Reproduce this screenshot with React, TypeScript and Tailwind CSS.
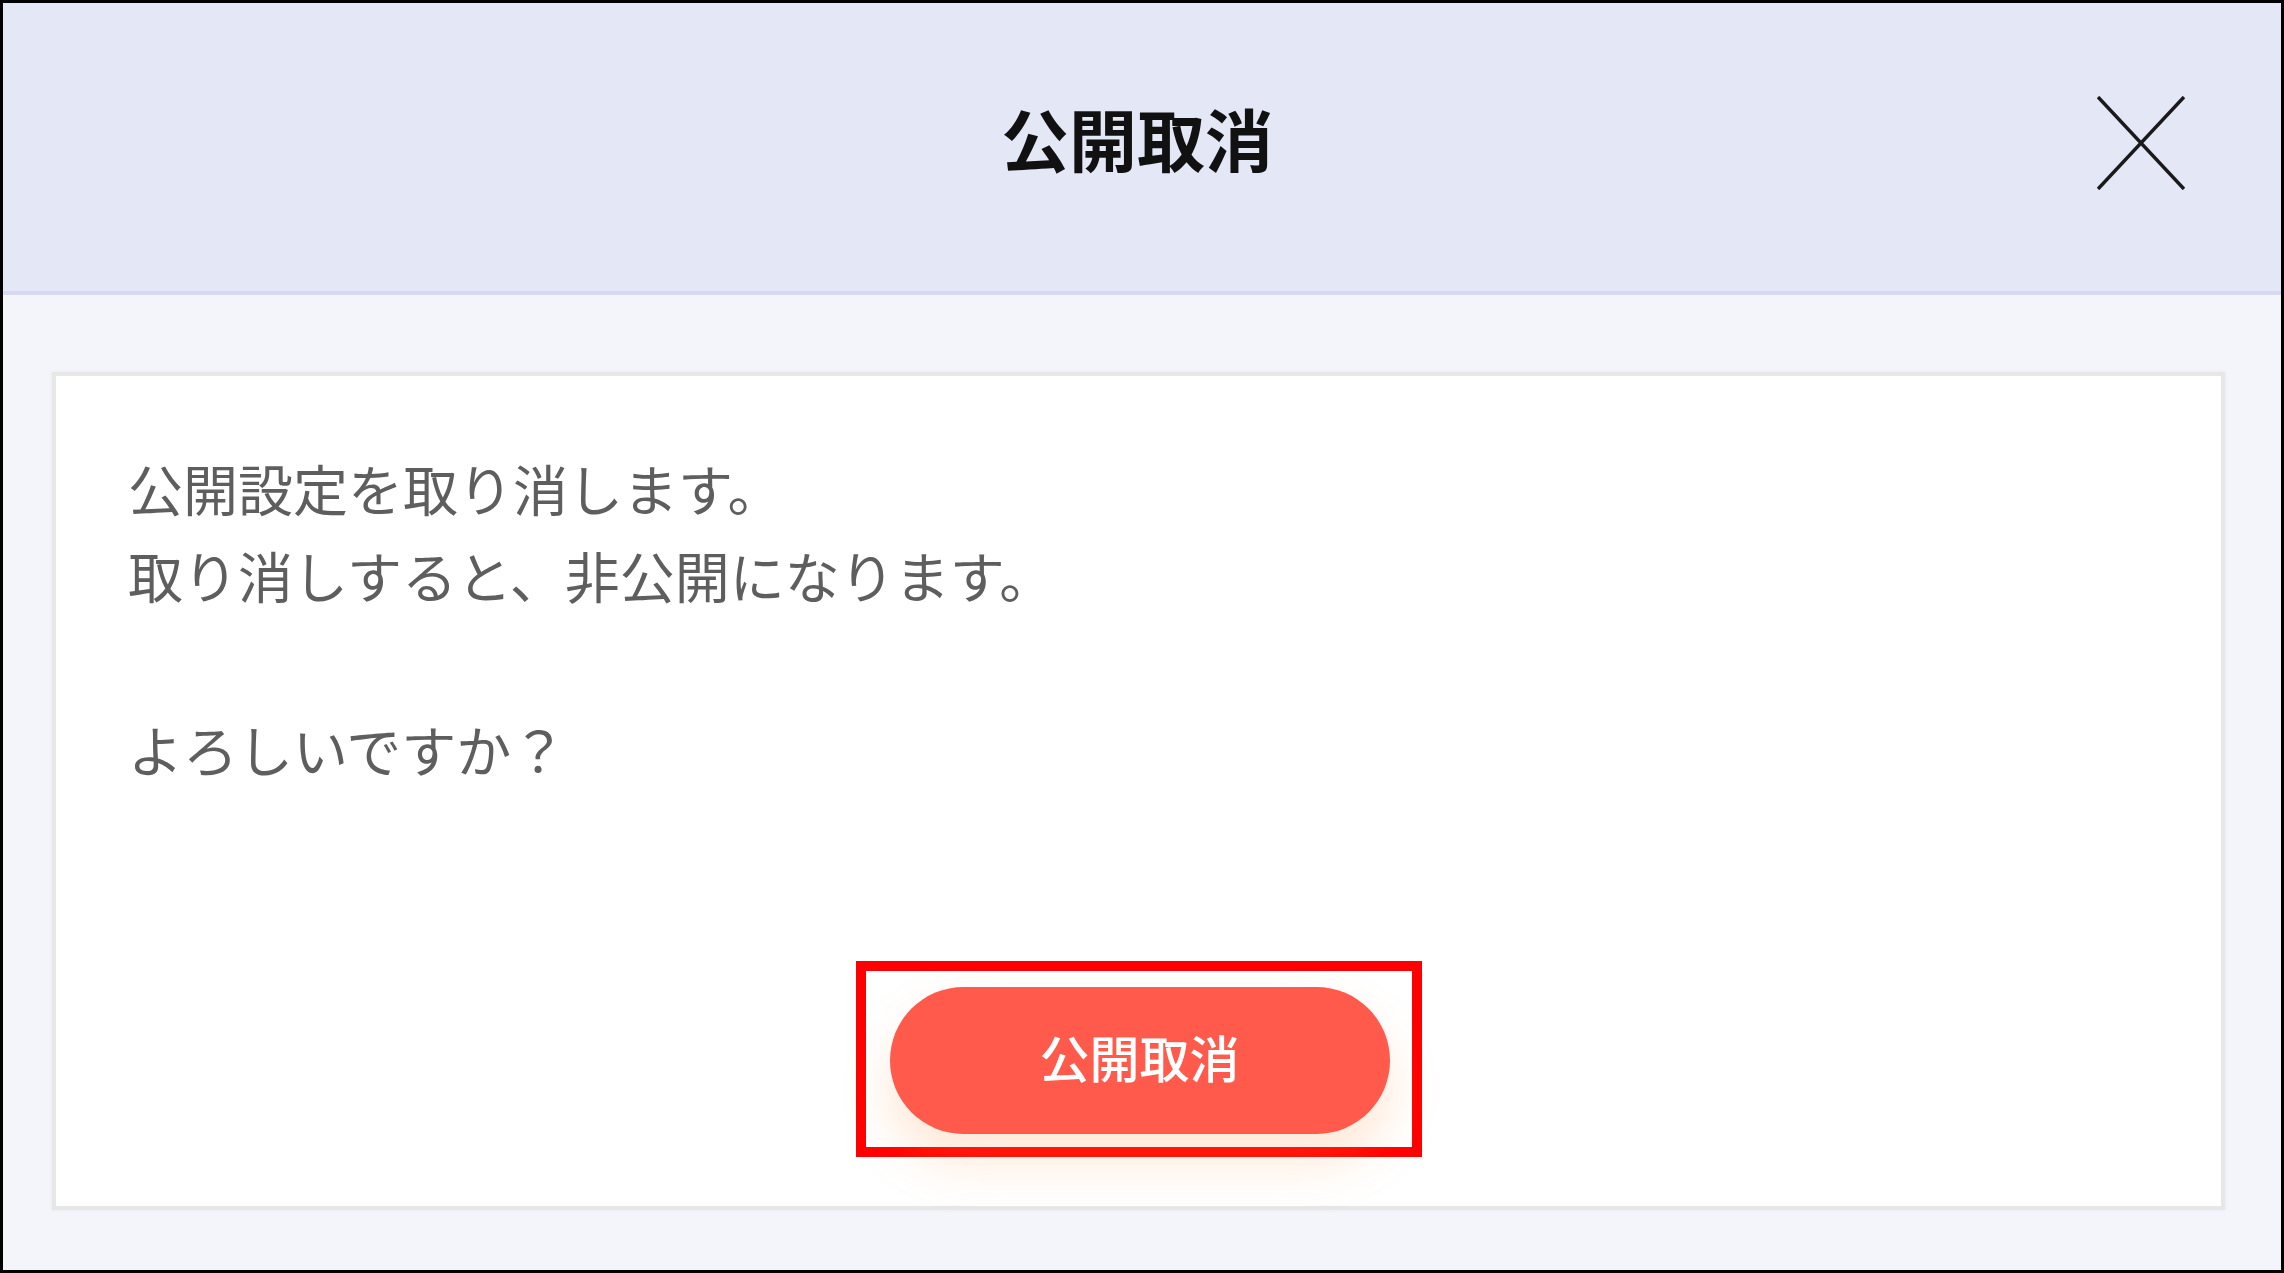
export default function App() {
  const lines = ['公開設定を取り消します。', '取り消しすると、非公開になります。', '', 'よろしいですか？']

  return (
    <div
      className="w-[2284px] h-[1273px] border-[3px] border-black bg-[#f4f5fa] flex flex-col"
      style={{ fontFamily: '"Noto Sans CJK JP", "Noto Sans", sans-serif' }}
    >
      {/* header */}
      <div className="h-[292px] shrink-0 bg-[#e4e7f6] border-b-[4px] border-[#d6daf1] flex items-center justify-center relative">
        <h1 className="text-[68px] font-bold text-[#111] leading-none -mt-[18px] -ml-[10px]">公開取消</h1>
        <button className="absolute right-[96px] top-[93px] w-[88px] h-[94px]">
          <svg viewBox="0 0 88 94" className="w-full h-full">
            <path d="M1 1 L87 93 M87 1 L1 93" stroke="#1a1a1a" strokeWidth="3.5" fill="none" />
          </svg>
        </button>
      </div>

      {/* body */}
      <div className="flex-1 pt-[77px] pl-[49px] pr-[56px] pb-[60px]">
        <div className="h-full bg-white border-[4px] border-[#e7e7e7] shadow-[0_0_4px_rgba(0,0,0,0.05)] pt-[68px] pl-[72px] pb-[49px] flex flex-col">
          <div className="text-[55px] leading-[87px] text-[#5e5e5e]">
            {lines.map((l, i) => (
              <p key={i} className="h-[87px]">{l}</p>
            ))}
          </div>
          <div className="mt-auto flex justify-center pr-[72px]">
            <div className="border-[10px] border-[#ff0000] pl-[24px] pr-[22px] pt-[16px] pb-[13px]">
              <button className="w-[500px] h-[147px] pb-[8px] rounded-full bg-[#ff5a4b] text-white text-[50px] font-medium shadow-[0_28px_50px_rgba(255,150,70,0.22)]">
                公開取消
              </button>
            </div>
          </div>
        </div>
      </div>
    </div>
  )
}
